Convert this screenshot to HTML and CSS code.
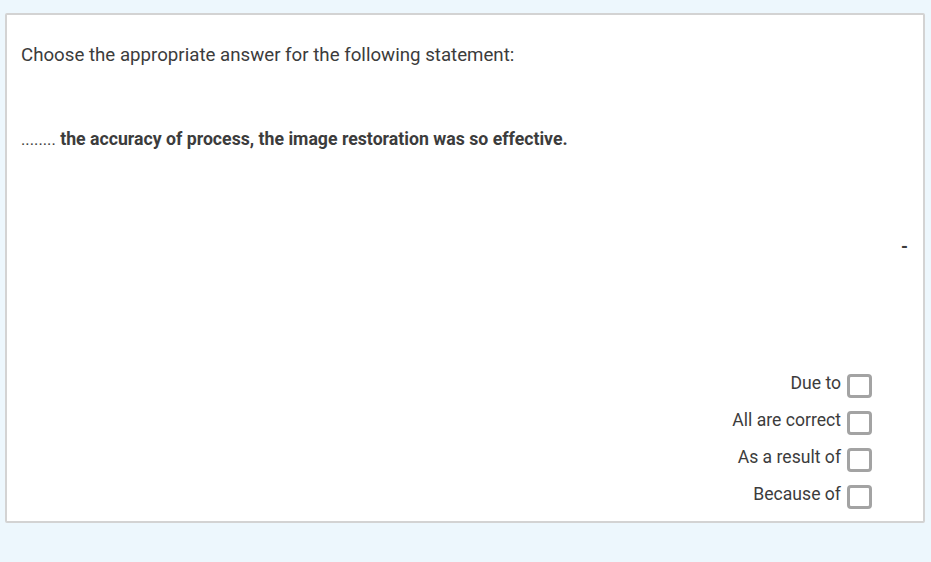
FILE: index.html
```html
<!DOCTYPE html>
<html>
<head>
<meta charset="utf-8">
<link rel="stylesheet" href="styles.css">
</head>
<body>
<div class="card">
  <p class="prompt">Choose the appropriate answer for the following statement:</p>
  <p class="statement"><span class="dots">........</span> the accuracy of process, the image restoration was so effective.</p>
  <div class="dash-row"><span class="dash">-</span></div>
  <div class="options">
    <label class="option"><span>Due to</span><span class="box"></span></label>
    <label class="option"><span>All are correct</span><span class="box"></span></label>
    <label class="option"><span>As a result of</span><span class="box"></span></label>
    <label class="option"><span>Because of</span><span class="box"></span></label>
  </div>
</div>
</body>
</html>
```
FILE: styles.css
```css
html, body {
  margin: 0;
  padding: 0;
}
body {
  background: #edf7fd;
  font-family: Roboto, "Liberation Sans", sans-serif;
  color: #3c3c3c;
  padding: 13px 6px 0 5px;
  height: 562px;
  box-sizing: border-box;
}
.card {
  background: #fff;
  border: 2px solid #d3d3d3;
  border-radius: 2px;
  height: 510px;
  box-sizing: border-box;
  padding: 0 0 0 14px;
  display: flex;
  flex-direction: column;
}
.prompt {
  margin: 29px 0 0 0;
  font-size: 18.7px;
  line-height: 22px;
}
.statement {
  margin: 62px 0 0 0;
  font-size: 17.7px;
  line-height: 22px;
  font-weight: bold;
}
.dots {
  font-weight: normal;
  font-size: 16.5px;
}
.dash-row {
  display: flex;
  justify-content: flex-end;
  padding-right: 15px;
  margin-top: 85px;
  font-weight: bold;
  font-size: 17.7px;
  line-height: 22px;
}
.options {
  margin-top: 113px;
  display: flex;
  flex-direction: column;
  align-items: flex-end;
  padding-right: 51px;
  gap: 10px;
}
.option {
  display: flex;
  align-items: flex-start;
  gap: 6px;
  font-size: 17.6px;
  line-height: 24px;
}
.box {
  width: 25px;
  height: 24px;
  box-sizing: border-box;
  border: 3px solid #a3a3a3;
  border-radius: 4px;
  margin-top: 3px;
}
```
